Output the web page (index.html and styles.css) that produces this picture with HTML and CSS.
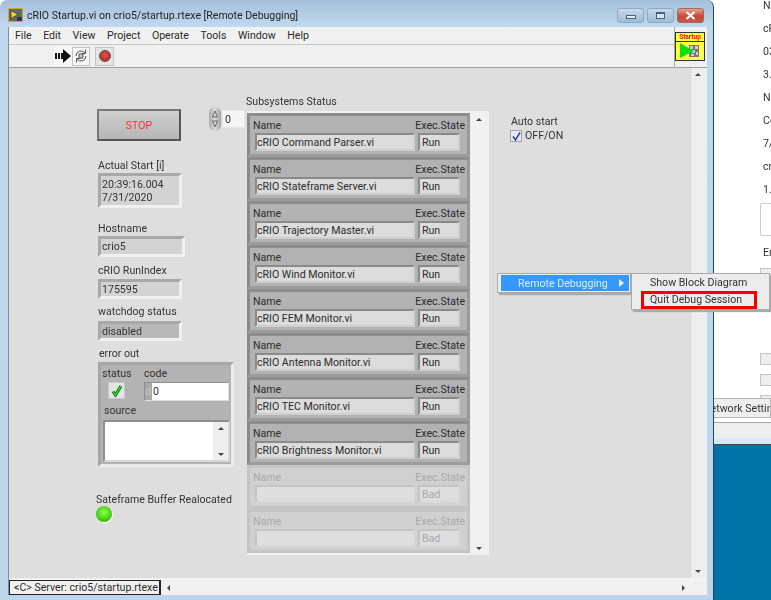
FILE: index.html
```html
<!DOCTYPE html>
<html lang="en">
<head>
<meta charset="utf-8">
<title>cRIO Startup.vi</title>
<link rel="stylesheet" href="styles.css">
</head>
<body>
<div class="screen">
  <div class="window">
    <div class="titlebar">
      <svg class="appicon" width="15" height="14" viewBox="0 0 15 14"><rect x="0.500" y="0.500" width="14" height="13" fill="#5f6a70" stroke="#d8a820"/><path d="M3 2.500l7 4-7 4z" fill="#f0d040" stroke="#222" stroke-width=".6"/><rect x="9" y="9" width="5" height="4" fill="#2c3a48"/></svg>
      <span class="title">cRIO Startup.vi on crio5/startup.rtexe [Remote Debugging]</span>
      <div class="winbtns">
        <div class="winbtn"><span class="glyph-min"></span></div>
        <div class="winbtn"><span class="glyph-max"></span></div>
        <div class="winbtn close"><svg width="11" height="9" viewBox="0 0 11 9"><path d="M1.500 1l8 7M9.500 1l-8 7" stroke="#fff" stroke-width="2.200"/></svg></div>
      </div>
    </div>
    <div class="client">
      <div class="topbars">
        <div class="bars">
          <nav class="menubar">
            <span>File</span><span>Edit</span><span>View</span><span>Project</span><span>Operate</span><span>Tools</span><span>Window</span><span>Help</span>
          </nav>
          <div class="toolbar">
            <div class="tool"><svg width="16" height="14" viewBox="0 0 16 14"><path d="M0 4h2v6H0zM3 4h2v6H3zM6 4h2V0l8 7-8 7v-4H6z" fill="#111"/></svg></div>
            <div class="tool framed"><svg width="16" height="16" viewBox="0 0 16 16" fill="none" stroke="#555"><path d="M3 8a5 5 0 0 1 9-3M13 8a5 5 0 0 1-9 3"/><path d="M12.500 1.500v4h-4M3.500 14.500v-4h4" stroke-width="1"/><path d="M6 6h4v4H6z" fill="#ccc"/></svg></div>
            <div class="tool framed abort"><span class="abort-dot"></span></div>
          </div>
        </div>
        <div class="vi-icon">
          <div class="vi-icon-label">Startup</div>
          <svg width="25" height="16" viewBox="0 0 25 16"><rect x="11" y="2" width="10" height="12" fill="#777"/><path d="M12 3h3v3h-3zM17 3h3v3h-3zM14 7h3v3h-3zM18 9h2v3h-2zM13 11h3v2h-3z" fill="#ccc"/><path d="M2 0l14 8L2 15z" fill="#11dd11"/></svg>
        </div>
      </div>
      <div class="panel-row">
        <main class="panel">
          <button class="stop">STOP</button>

          <div class="index">
            <div class="spinner"><svg width="12" height="24" viewBox="0 0 12 24"><path d="M6 4l-2.500 6h5zM6 20l-2.500-6h5z" fill="none" stroke="#666"/></svg></div>
            <div class="index-field">0</div>
          </div>

          <div class="lbl l-start">Actual Start [i]</div>
          <div class="sunken v-start">20:39:16.004<br>7/31/2020</div>
          <div class="lbl l-host">Hostname</div>
          <div class="sunken v-host">crio5</div>
          <div class="lbl l-run">cRIO RunIndex</div>
          <div class="sunken v-run">175595</div>
          <div class="lbl l-dog">watchdog status</div>
          <div class="sunken v-dog">disabled</div>
          <div class="lbl l-err">error out</div>

          <section class="errcluster">
            <div class="err-top">
              <div class="err-status">
                <div class="small">status</div>
                <div class="checkled"><svg width="12" height="13" viewBox="0 0 12 13"><path d="M2 7.500l2.500 3.500L10 2" fill="none" stroke="#0a5a0a" stroke-width="3"/><path d="M2 7.500l2.500 3.500L10 2" fill="none" stroke="#3f3" stroke-width="1.200"/></svg></div>
              </div>
              <div class="err-code">
                <div class="small">code</div>
                <div class="codefield"><span class="radix">d</span><span class="codeval">0</span></div>
              </div>
            </div>
            <div class="small src">source</div>
            <div class="srcbox"><span class="arr-up"></span><span class="arr-dn"></span></div>
          </section>

          <div class="lbl l-led">Sateframe Buffer Realocated</div>
          <div class="led"></div>

          <div class="lbl l-arr">Subsystems Status</div>
          <section class="array">
            <div class="cells">
              <div class="cell"><div class="heads"><span>Name</span><span>Exec.State</span></div><div class="fields"><div class="f-name">cRIO Command Parser.vi</div><div class="f-state">Run</div></div></div>
              <div class="cell"><div class="heads"><span>Name</span><span>Exec.State</span></div><div class="fields"><div class="f-name">cRIO Stateframe Server.vi</div><div class="f-state">Run</div></div></div>
              <div class="cell"><div class="heads"><span>Name</span><span>Exec.State</span></div><div class="fields"><div class="f-name">cRIO Trajectory Master.vi</div><div class="f-state">Run</div></div></div>
              <div class="cell"><div class="heads"><span>Name</span><span>Exec.State</span></div><div class="fields"><div class="f-name">cRIO Wind Monitor.vi</div><div class="f-state">Run</div></div></div>
              <div class="cell"><div class="heads"><span>Name</span><span>Exec.State</span></div><div class="fields"><div class="f-name">cRIO FEM Monitor.vi</div><div class="f-state">Run</div></div></div>
              <div class="cell"><div class="heads"><span>Name</span><span>Exec.State</span></div><div class="fields"><div class="f-name">cRIO Antenna Monitor.vi</div><div class="f-state">Run</div></div></div>
              <div class="cell"><div class="heads"><span>Name</span><span>Exec.State</span></div><div class="fields"><div class="f-name">cRIO TEC Monitor.vi</div><div class="f-state">Run</div></div></div>
              <div class="cell"><div class="heads"><span>Name</span><span>Exec.State</span></div><div class="fields"><div class="f-name">cRIO Brightness Monitor.vi</div><div class="f-state">Run</div></div></div>
              <div class="cell off"><div class="heads"><span>Name</span><span>Exec.State</span></div><div class="fields"><div class="f-name"></div><div class="f-state">Bad</div></div></div>
              <div class="cell off"><div class="heads"><span>Name</span><span>Exec.State</span></div><div class="fields"><div class="f-name"></div><div class="f-state">Bad</div></div></div>
            </div>
            <div class="array-scroll"><span class="arr-up"></span><span class="arr-dn"></span></div>
          </section>

          <div class="lbl l-auto">Auto start</div>
          <div class="auto">
            <span class="check"><svg width="9" height="9" viewBox="0 0 9 9"><path d="M1 4.500l2.500 3.500L8 0.500" fill="none" stroke="#33468f" stroke-width="1.500"/></svg></span>
            <span>OFF/ON</span>
          </div>
        </main>
        <div class="vscroll"><span class="arr-up"></span><span class="arr-dn"></span></div>
      </div>
      <div class="statusbar">
        <div class="status-tag">&lt;C&gt; Server: crio5/startup.rtexe</div>
        <div class="hscroll"><span class="arr-left"></span><span class="arr-right"></span></div>
        <div class="grip"></div>
      </div>
    </div>
  </div>

  <aside class="side">
    <div class="side-white">
      <p>N</p><p>cR</p><p>03</p><p>3.</p><p>N</p><p>Co</p><p>7/</p><p>cr</p><p>1.</p>
      <div class="side-box"></div>
      <p class="side-en">En</p>
      <div class="side-cb c1"></div>
      <div class="side-cb c2"></div>
      <div class="side-cb c3"></div>
      <div class="side-cb c4"></div>
    </div>
    <div class="side-tab">Network Settings</div>
    <div class="side-gap"></div>
    <div class="side-band"></div>
    <div class="side-blue"></div>
  </aside>

  <div class="ctx">
    <div class="ctx-main"><div class="ctx-item">Remote Debugging<span class="ctx-arrow"></span></div></div>
    <div class="ctx-sub">
      <div class="ctx-subitem">Show Block Diagram</div>
      <div class="ctx-subitem">Quit Debug Session</div>
      <div class="redbox"></div>
    </div>
  </div>
</div>
</body>
</html>
```

FILE: styles.css
```css
* { box-sizing: border-box; }
html, body { margin: 0; padding: 0; background: #fff; }
body { font-family: Roboto, "Open Sans", "Liberation Sans", sans-serif; font-size: 10.6px; color: #333; overflow: hidden; }
.screen { position: relative; width: 771px; height: 600px; display: flex; overflow: hidden; filter: blur(.35px); }

/* window frame */
.window {
  width: 714px; height: 600px; display: flex; flex-direction: column; flex: none;
  background: linear-gradient(180deg, #a3bfd9 0, #c0d8ec 26px, #bcd5ea 100%);
  border-right: 1px solid #1d4a60;
  border-radius: 7px 7px 0 0;
  padding: 0 6px 0 8px;
}
.titlebar { height: 27px; display: flex; align-items: center; flex: none; position: relative; }
.appicon { margin-top: 3px; flex: none; }
.title { margin-left: 4px; margin-top: 3px; font-size: 10.5px; color: #222; white-space: nowrap; }
.winbtns { margin-left: auto; display: flex; gap: 3px; margin-top: 3px; margin-right: 3px; }
.winbtn { width: 27px; height: 15px; border: 1px solid #8fa9c0; border-radius: 3px; background: linear-gradient(180deg, #c6d9ea, #9dbbd5); display: flex; align-items: center; justify-content: center; }
.winbtn.close { background: linear-gradient(180deg, #e8a090, #c5493a 55%, #c9584a); border-color: #a06a60; }
.glyph-min { width: 10px; height: 4px; margin-top: 3px; background: #eee; border: 1px solid #44627f; }
.glyph-max { width: 9px; height: 7px; background: #d8e6f2; border: 1px solid #44627f; border-top-width: 2px; }

.client { flex: 1; display: flex; flex-direction: column; background: #f0f0f0; min-height: 0; margin-bottom: 5px; border-left: 1px solid #7e8f9c; }

/* menu and tools */
.topbars { height: 41px; display: flex; flex: none; border-bottom: 1px solid #a0a0a0; position: relative; }
.topbars::before { content: ""; position: absolute; right: 32px; top: 0; bottom: 0; width: 1px; background: #a8a8a8; }
.bars { flex: 1; display: flex; flex-direction: column; }
.menubar { height: 18px; display: flex; align-items: center; gap: 11.5px; padding-left: 6px; background: #f1f1f1; border-bottom: 1px solid #c8c8c8; color: #2a2a2a; }
.menubar span { white-space: nowrap; }
.toolbar { flex: 1; display: flex; align-items: center; padding-left: 45px; background: #f0f0f0; }
.tool { width: 18px; height: 19px; display: flex; align-items: center; justify-content: center; background: #f6f6f6; }
.tool.framed { border: 1px solid #c4c4c4; }
.tool.abort { width: 19px; margin-left: 5px; background: #e4e4e4; }
.abort-dot { width: 12px; height: 12px; border-radius: 50%; background: radial-gradient(circle at 50% 40%, #e05050, #b02020); border: 1px solid #555; }
.vi-icon { width: 30px; margin-right: 2px; height: 29px; margin-top: 5px; padding-left: 1px; background: #ffff44; border: 1px solid #333; flex: none; }
.vi-icon-label { height: 9px; font-size: 6.500px; line-height: 8px; font-weight: 700; color: #f01010; text-align: center; border-bottom: 1px solid #333; margin-left: -1px; }
.vi-icon svg { display: block; margin: 1px 0 0 1px; }

.panel-row { flex: 1; display: flex; min-height: 0; }
.panel { position: relative; flex: 1; background: #dedede; }
.vscroll { width: 16px; position: relative; background: #eeeeee; border-left: 1px solid #e8e8e8; }
.vscroll .arr-up { position: absolute; top: 5px; left: 3px; }
.vscroll .arr-dn { position: absolute; bottom: 5px; left: 3px; }

.arr-up, .arr-dn, .arr-left, .arr-right { display: block; width: 0; height: 0; }
.arr-up { border-left: 3px solid transparent; border-right: 3px solid transparent; border-bottom: 3px solid #444; }
.arr-dn { border-left: 3px solid transparent; border-right: 3px solid transparent; border-top: 3px solid #444; }
.arr-left { border-top: 3px solid transparent; border-bottom: 3px solid transparent; border-right: 3px solid #444; }
.arr-right { border-top: 3px solid transparent; border-bottom: 3px solid transparent; border-left: 3px solid #444; }

/* front-panel controls sit on a free canvas: offsets are relative to .panel (origin 9,68) */
.lbl { position: absolute; white-space: nowrap; line-height: 14px; margin-top: 1px; }
.stop { position: absolute; left: 88px; top: 41px; width: 84px; height: 32px; border: 2px solid; border-color: #777 #555 #555 #777; background: linear-gradient(180deg, #cfcfcf, #b6b6b6); font: inherit; color: #f8303c; padding: 0; }
.index { position: absolute; left: 200px; top: 39px; display: flex; align-items: center; }
.spinner { width: 12px; height: 24px; border-radius: 6px; background: linear-gradient(90deg, #a8a8a8, #dcdcdc, #a0a0a0); }
.index-field { width: 23px; height: 18px; margin-left: 1px; padding-left: 2px; line-height: 17px; background: #f5f5f5; border: 1px solid #e6e6e6; }
.sunken { position: absolute; padding-left: 1px; white-space: nowrap; background: #d3d3d3; border: 3px solid; border-color: #a8a8a8 #f0f0f0 #f0f0f0 #a8a8a8; line-height: 13px; display: flex; align-items: center; }

.l-start { left: 89px; top: 90px; }
.v-start { left: 89px; top: 105px; width: 84px; height: 35px; display: block; padding-top: 2px; }
.l-host { left: 89px; top: 153px; }
.v-host { left: 89px; top: 168px; width: 87px; height: 21px; }
.l-run { left: 89px; top: 195px; }
.v-run { left: 89px; top: 211px; width: 84px; height: 20px; }
.l-dog { left: 89px; top: 236px; }
.v-dog { left: 89px; top: 253px; width: 84px; height: 20px; background: #b8b8b8; }
.l-err { left: 90px; top: 278px; }

.errcluster { position: absolute; left: 89px; top: 294px; width: 136px; height: 105px; background: #b3b3b3; border: 3px solid; border-color: #a6a6a6 #ececec #ececec #a6a6a6; padding: 2px 1px 1px; }
.small { line-height: 14px; }
.err-top { display: flex; }
.err-status { width: 42px; }
.checkled { width: 17px; height: 17px; margin: 1px 0 0 6px; background: #e4e4e4; border: 1px solid #c8c8c8; display: flex; align-items: center; justify-content: center; }
.codefield { width: 85px; height: 19px; margin-top: 1px; display: flex; background: #fff; border: 1px solid; border-color: #8e8e8e #ddd #ddd #8e8e8e; }
.radix { width: 7px; background: #a8a8a8; color: #c8c8c8; line-height: 17px; }
.codeval { padding-left: 1px; line-height: 17px; }
.src { padding-left: 2px; margin-top: 3px; }
.srcbox { position: relative; width: 127px; height: 42px; margin: 2px 0 0 1px; background: #fff; border: 2px solid; border-color: #8e8e8e #d8d8d8 #d8d8d8 #8e8e8e; }
.srcbox::after { content: ""; position: absolute; right: 0; top: 0; bottom: 0; width: 15px; background: #eeeeee; }
.srcbox .arr-up { position: absolute; z-index: 1; right: 4px; top: 5px; }
.srcbox .arr-dn { position: absolute; z-index: 1; right: 4px; bottom: 4px; }
.l-led { left: 87px; top: 424px; }
.led { position: absolute; left: 87px; top: 438px; width: 16px; height: 16px; border-radius: 50%; background: radial-gradient(circle at 50% 40%, #90ff50, #40d010 60%, #2e9a10); box-shadow: 1px 1px 0 #fff; }

/* array */
.l-arr { left: 237px; top: 26px; }
.array { position: absolute; left: 238px; top: 43px; width: 242px; height: 444px; padding-top: 2px; display: flex; background: #f0f0f0; }
.cells { width: 223px; display: flex; flex-direction: column; }
.array-scroll { flex: 1; position: relative; }
.array-scroll .arr-up { position: absolute; top: 5px; left: 6px; }
.array-scroll .arr-dn { position: absolute; bottom: 5px; left: 6px; }
.cell { height: 44px; background: #b2b2b2; border: 3px solid; border-color: #8d8d8d #999 #9c9c9c #8a8a8a; padding: 0 2px 0 5px; flex: none; }
.heads { height: 17px; padding-top: 1px; margin-left: -2px; display: flex; justify-content: space-between; align-items: center; color: #2b2b2b; white-space: nowrap; }
.fields { display: flex; gap: 3px; }
.f-name, .f-state { height: 18px; line-height: 15px; background: #dcdcdc; border: 2px solid; border-color: #8a8a8a #cfcfcf #cfcfcf #8a8a8a; color: #2b2b2b; white-space: nowrap; }
.f-name { width: 160px; padding-left: 0; }
.f-state { width: 42px; padding-left: 2px; }
.cell.off { background: #d0d0d0; border-color: #c4c4c4; }
.cell.off .heads { color: #a8a8a8; }
.cell.off .f-name, .cell.off .f-state { background: #dedede; border-color: #c4c4c4 #d8d8d8 #d8d8d8 #c4c4c4; color: #a8a8a8; }

.l-auto { left: 502px; top: 46px; }
.auto { position: absolute; left: 501px; top: 61px; display: flex; align-items: center; gap: 3px; line-height: 14px; }
.check { width: 12px; height: 12px; display: flex; align-items: center; justify-content: center; background: #e8e8ee; border: 1px solid #a4a4a4; }

/* status bar */
.statusbar { height: 16px; flex: none; display: flex; background: #f0f0f0; border-top: 1px solid #f6f6f6; margin-top: 1px; }
.status-tag { width: 152px; height: 15px; border: 1px solid #222; border-width: 1px 2px 1px 1px; background: #f0f0f0; line-height: 13px; padding-left: 4px; white-space: nowrap; color: #2b2b2b; }
.hscroll { width: 530px; flex: none; display: flex; justify-content: space-between; align-items: center; padding: 0 6px; }
.grip { flex: 1; }

/* right-hand window behind */
.side { flex: 1; display: flex; flex-direction: column; min-width: 0; background: #fff; }
.side-white { height: 398px; flex: none; position: relative; padding: 0 0 0 49px; overflow: hidden; }
.side-white p { margin: 0 0 9px; height: 14px; line-height: 14px; white-space: nowrap; color: #333; }
.side-white p:first-child { margin-top: -1px; }
.side-box { position: absolute; left: 46px; top: 203px; width: 40px; height: 33px; border: 1px solid #ccc; border-radius: 2px; background: #fff; }
.side-white .side-en { position: absolute; left: 49px; top: 246px; margin: 0; }
.side-cb { position: absolute; left: 46px; width: 12px; height: 12px; background: #eee; border: 1px solid #c4c4c4; }
.c1 { top: 268px; } .c2 { top: 353px; } .c3 { top: 374px; } .c4 { top: 395px; }
.side-tab { height: 20px; flex: none; background: #eee; border: 1px solid #b8b8b8; border-left: 0; line-height: 19px; white-space: nowrap; overflow: hidden; text-indent: -11px; color: #333; }
.side-gap { height: 5px; flex: none; background: #fff; border-bottom: 1px solid #aaa; }
.side-band { height: 22px; flex: none; background: linear-gradient(180deg, #eee 0, #eee 15px, #d6e8f0 16px); border-bottom: 1px solid #444; }
.side-blue { flex: 1; background: #0073a6; }

/* popup menus overlay the page */
.ctx { position: absolute; left: 497px; top: 273px; display: flex; align-items: flex-start; color: #333; }
.ctx-main { width: 134px; height: 20px; padding: 1px 1px 2px 3px; background: #ececec; border: 1px solid #aaa; box-shadow: 2px 2px 1px #aaa; }
.ctx-item { height: 16px; background: #3399ff; color: #dcecff; padding-left: 17px; line-height: 15px; display: flex; align-items: center; position: relative; }
.ctx-arrow { position: absolute; left: 118px; top: 4px; width: 0; height: 0; border-top: 4px solid transparent; border-bottom: 4px solid transparent; border-left: 5px solid #e8f2ff; }
.ctx-sub { position: relative; width: 139px; height: 37px; background: #ececec; border: 1px solid #aaa; box-shadow: 2px 2px 1px #aaa; padding: 0 0 0 18px; color: #333; }
.ctx-subitem { height: 17px; line-height: 17px; white-space: nowrap; }
.redbox { position: absolute; left: 9px; top: 17px; width: 116px; height: 18px; border: 3px solid #f00000; }
```
